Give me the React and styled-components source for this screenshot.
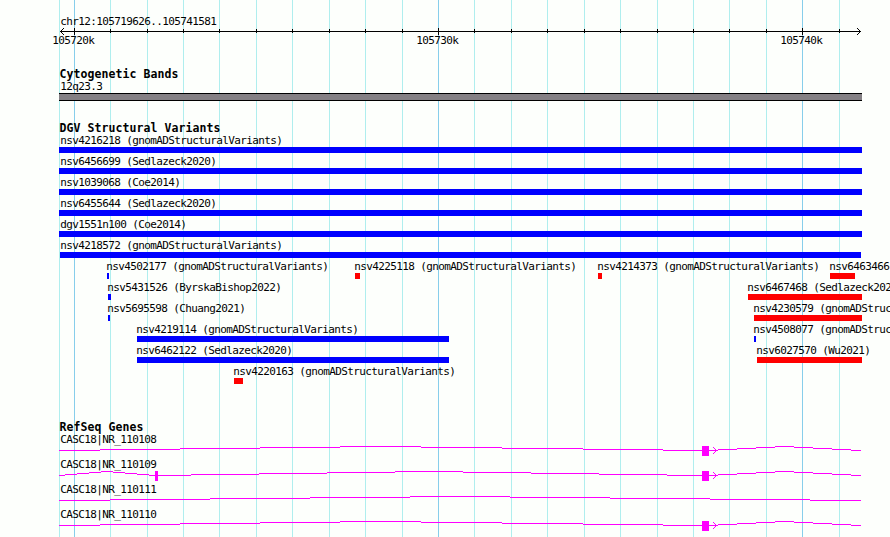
import React from "react";
import styled, { createGlobalStyle } from "styled-components";

const LEFT = 59;
const RIGHT = 862;

const majorLines = [74, 438, 802];
const minorLines = [
  59, 110, 147, 183, 219, 256, 292, 329, 365, 402, 474, 511, 547, 584, 620,
  657, 693, 729, 766, 839,
];
const lines = [
  ...majorLines.map((x) => ({ x, color: "#87ceeb" })),
  ...minorLines.map((x) => ({ x, color: "#afeeee" })),
];

const GlobalStyle = createGlobalStyle`
  body {
    margin: 0;
    overflow: hidden;
    background: #fdfffc;
  }
`;

const Browser = styled.main`
  width: 890px;
  height: 537px;
  overflow: hidden;
  color: #000;
  font-family: "DejaVu Sans Mono", monospace;
  font-size: 11px;
  letter-spacing: -0.62px;
  white-space: pre;
  background-color: #fdfffc;
  background-image: ${lines
    .map(({ color }) => `linear-gradient(${color}, ${color})`)
    .join(", ")};
  background-position: ${lines.map(({ x }) => `${x}px 0`).join(", ")};
  background-size: 1px 100%;
  background-repeat: no-repeat;
`;

const Label = styled.div`
  height: 14px;
  line-height: 16px;
  padding-left: 60.2px;
`;

const Ruler = styled.header`
  padding-top: 14px;
  height: 52px;
`;

const Drawing = styled.svg`
  display: block;
  shape-rendering: crispEdges;
`;

/* every child shares the single cell, its margin is its place on the sequence */
const Lane = styled.div`
  display: grid;
  grid-template-columns: 890px;
  height: ${({ $height }) => $height}px;
  > * {
    grid-area: 1 / 1;
  }
`;

const Tick = styled.span`
  margin-left: ${({ $x }) => $x - 21.8}px;
  line-height: 12px;
`;

const Title = styled.h2`
  margin: 0;
  padding-left: 59.4px;
  height: 13px;
  line-height: 17px;
  font-size: 11.5px;
  font-weight: bold;
  letter-spacing: 0.08px;
`;

const Track = styled.section`
  height: ${({ $height }) => $height}px;
`;

const Band = styled.div`
  box-sizing: border-box;
  width: ${RIGHT - LEFT}px;
  height: 8px;
  margin-left: ${LEFT}px;
  border: solid #000;
  border-width: 1px 0;
  background: #848084;
`;

const Feature = styled.div`
  margin-left: ${({ $x }) => $x}px;
`;

const Name = styled.div`
  height: 14px;
  line-height: 16px;
  margin-left: ${({ $shift }) => $shift}px;
`;

const Bar = styled.div`
  width: ${({ $width }) => $width}px;
  height: 6px;
  background: ${({ $loss }) => ($loss ? "#ff0000" : "#0000ff")};
`;

const Gene = styled.div`
  height: 25px;
`;

const variants = [
  [{ name: "nsv4216218 (gnomADStructuralVariants)", x: 59, end: 862 }],
  [{ name: "nsv6456699 (Sedlazeck2020)", x: 59, end: 862 }],
  [{ name: "nsv1039068 (Coe2014)", x: 59, end: 862 }],
  [{ name: "nsv6455644 (Sedlazeck2020)", x: 59, end: 862 }],
  [{ name: "dgv1551n100 (Coe2014)", x: 59, end: 862 }],
  [{ name: "nsv4218572 (gnomADStructuralVariants)", x: 60, end: 861 }],
  [
    { name: "nsv4502177 (gnomADStructuralVariants)", x: 107, end: 109 },
    { name: "nsv4225118 (gnomADStructuralVariants)", x: 355, end: 360, loss: true },
    { name: "nsv4214373 (gnomADStructuralVariants)", x: 598, end: 602, loss: true },
    { name: "nsv6463466 (Sedlazeck2020)", x: 830, end: 855, loss: true },
  ],
  [
    { name: "nsv5431526 (ByrskaBishop2022)", x: 108, end: 111 },
    { name: "nsv6467468 (Sedlazeck2020)", x: 748, end: 862, loss: true },
  ],
  [
    { name: "nsv5695598 (Chuang2021)", x: 108, end: 110 },
    { name: "nsv4230579 (gnomADStructuralVariants)", x: 754, end: 862, loss: true },
  ],
  [
    { name: "nsv4219114 (gnomADStructuralVariants)", x: 137, end: 449 },
    { name: "nsv4508077 (gnomADStructuralVariants)", x: 754, end: 756 },
  ],
  [
    { name: "nsv6462122 (Sedlazeck2020)", x: 137, end: 449 },
    { name: "nsv6027570 (Wu2021)", x: 757, end: 862, loss: true },
  ],
  [{ name: "nsv4220163 (gnomADStructuralVariants)", x: 234, end: 243, loss: true }],
];

// names of features that start left of the view are pushed inside it
const nameShift = (x) => Math.max(x - 0.8, 60.2) - x;

const lastIntron = [709, 718, 737, 756, 775, 794, 813, 832, 851, 861];
const longIntron = [59, 100, 180, 260, 340, 421, 502, 583, 663, 702];

const genes = [
  {
    name: "CASC18|NR_110108",
    introns: [longIntron, lastIntron],
    exons: [[702, 7]],
    arrow: true,
  },
  {
    name: "CASC18|NR_110109",
    introns: [
      [59, 65, 77, 89, 101, 113, 125, 137, 149, 155],
      [158, 191, 259, 327, 395, 463, 531, 599, 667, 702],
      lastIntron,
    ],
    exons: [
      [155, 3],
      [702, 7],
    ],
    arrow: true,
  },
  {
    name: "CASC18|NR_110111",
    introns: [[59, 110, 210, 310, 410, 510, 610, 710, 810, 861]],
    exons: [],
  },
  {
    name: "CASC18|NR_110110",
    introns: [longIntron, lastIntron],
    exons: [[702, 7]],
    arrow: true,
  },
];

// an intron rises one pixel per step up to its middle and falls again
const Intron = ({ stops }) =>
  stops
    .slice(0, -1)
    .map((x, i) => (
      <rect
        key={x}
        x={x}
        y={4 - Math.min(i, 8 - i)}
        width={stops[i + 1] - x}
        height="1"
      />
    ));

const Axis = () => (
  <Drawing width="890" height="7">
    <rect x="60" y="3" width="801" height="1" />
    {minorLines.slice(1).map((x) => (
      <rect key={x} x={x} y="1" width="1" height="4" />
    ))}
    {majorLines.map((x) => (
      <rect key={x} x={x} y="0" width="1" height="7" />
    ))}
    {[1, 2, 3].map((d) => (
      <React.Fragment key={d}>
        <rect x={60 + d} y={3 - d} width="1" height="1" />
        <rect x={60 + d} y={3 + d} width="1" height="1" />
        <rect x={860 - d} y={3 - d} width="1" height="1" />
        <rect x={860 - d} y={3 + d} width="1" height="1" />
      </React.Fragment>
    ))}
  </Drawing>
);

const App = () => {
  return (
    <>
      <GlobalStyle />
      <Browser>
        <Ruler>
          <Label>chr12:105719626..105741581</Label>
          <Axis />
          <Lane $height={14}>
            {majorLines.map((x, i) => (
              <Tick key={x} $x={x}>
                {105720 + i * 10}k
              </Tick>
            ))}
          </Lane>
        </Ruler>
        <Track $height={54}>
          <Title>Cytogenetic Bands</Title>
          <Label>12q23.3</Label>
          <Band />
        </Track>
        <Track $height={299}>
          <Title>DGV Structural Variants</Title>
          {variants.map((row) => (
            <Lane key={row[0].name} $height={21}>
              {row.map(({ name, x, end, loss }) => (
                <Feature key={name} $x={x}>
                  <Name $shift={nameShift(x)}>{name}</Name>
                  <Bar $width={end - x} $loss={loss} />
                </Feature>
              ))}
            </Lane>
          ))}
        </Track>
        <Track $height={118}>
          <Title>RefSeq Genes</Title>
          {genes.map(({ name, introns, exons, arrow }) => (
            <Gene key={name}>
              <Label>{name}</Label>
              <Drawing width="890" height="11" fill="#ff00ff">
                {introns.map((stops) => (
                  <Intron key={stops[0]} stops={stops} />
                ))}
                {exons.map(([x, width]) => (
                  <rect key={x} x={x} y="0" width={width} height="10" />
                ))}
                {arrow &&
                  [1, 2, 3].map((d) => (
                    <React.Fragment key={d}>
                      <rect x={716 - d} y={4 - d} width="1" height="1" />
                      <rect x={716 - d} y={4 + d} width="1" height="1" />
                    </React.Fragment>
                  ))}
              </Drawing>
            </Gene>
          ))}
        </Track>
      </Browser>
    </>
  );
};

export default App;
